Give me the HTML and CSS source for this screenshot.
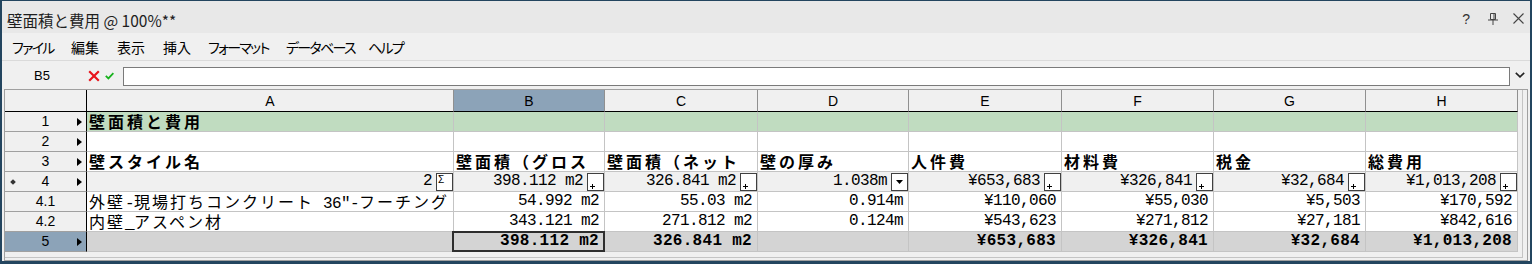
FILE: index.html
```html
<!DOCTYPE html>
<html lang="ja">
<head>
<meta charset="utf-8">
<title>壁面積と費用</title>
<link rel="stylesheet" href="styles.css">
</head>
<body>
<div class="window">
  <div class="titlebar">
    <span class="title">壁面積と費用 @ 100%**</span>
    <div class="tb-icons">
      <span class="tb-help">?</span>
      <svg class="tb-pin" width="10" height="12" viewBox="0 0 10 12"><path d="M2.5 0.5H7.5V6.5H2.5Z" fill="none" stroke="#444" stroke-width="1"/><path d="M6 1V6.5" stroke="#444" stroke-width="1"/><path d="M0 7H10" stroke="#444" stroke-width="1"/><path d="M5 7V12" stroke="#444" stroke-width="1"/></svg>
      <svg class="tb-close" width="11" height="11" viewBox="0 0 11 11"><path d="M0.5 0.5L10.5 10.5M10.5 0.5L0.5 10.5" stroke="#444" stroke-width="1.1"/></svg>
    </div>
  </div>
  <div class="menubar">
    <span class="mi k m-file">ファイル</span>
    <span class="mi m-edit">編集</span>
    <span class="mi m-view">表示</span>
    <span class="mi m-ins">挿入</span>
    <span class="mi k m-fmt">フォーマット</span>
    <span class="mi k m-db">データベース</span>
    <span class="mi k">ヘルプ</span>
  </div>
  <div class="formulabar">
    <div class="namebox">B5</div>
    <svg class="fx-cancel" width="12" height="12" viewBox="0 0 12 12"><path d="M1.2 1.2L10.8 10.8M10.8 1.2L1.2 10.8" stroke="#e8141b" stroke-width="2.2"/></svg>
    <svg class="fx-ok" width="9" height="8" viewBox="0 0 9 8"><path d="M0.8 3.8L3.4 6.4L8.4 1.2" fill="none" stroke="#17b21c" stroke-width="1.8"/></svg>
    <div class="fx-input"></div>
    <div class="fx-drop"><svg width="10" height="6" viewBox="0 0 10 6"><path d="M0.8 0.8L5 4.8L9.2 0.8" fill="none" stroke="#222" stroke-width="1.6"/></svg></div>
  </div>
  <div class="frame">
    <div class="viewport">
      <div class="grid">
        <div class="corner"></div>
        <div class="ch">A</div>
        <div class="ch sel">B</div>
        <div class="ch">C</div>
        <div class="ch">D</div>
        <div class="ch">E</div>
        <div class="ch">F</div>
        <div class="ch">G</div>
        <div class="ch">H</div>

        <div class="rh"><span class="rh-l"></span><span class="rh-n">1</span><span class="rh-r"><i class="tri"></i></span></div>
        <div class="c r1 b"><span class="jp">壁面積と費用</span></div>
        <div class="c r1"></div><div class="c r1"></div><div class="c r1"></div><div class="c r1"></div><div class="c r1"></div><div class="c r1"></div><div class="c r1"></div>

        <div class="rh"><span class="rh-l"></span><span class="rh-n">2</span><span class="rh-r"><i class="tri"></i></span></div>
        <div class="c"></div><div class="c"></div><div class="c"></div><div class="c"></div><div class="c"></div><div class="c"></div><div class="c"></div><div class="c"></div>

        <div class="rh"><span class="rh-l"></span><span class="rh-n">3</span><span class="rh-r"><i class="tri"></i></span></div>
        <div class="c b"><span class="jp">壁スタイル名</span></div>
        <div class="c b"><span class="jp">壁面積（グロス</span></div>
        <div class="c b"><span class="jp">壁面積（ネット</span></div>
        <div class="c b"><span class="jp">壁の厚み</span></div>
        <div class="c b"><span class="jp">人件費</span></div>
        <div class="c b"><span class="jp">材料費</span></div>
        <div class="c b"><span class="jp">税金</span></div>
        <div class="c b"><span class="jp">総費用</span></div>

        <div class="rh"><span class="rh-l"><i class="dia"></i></span><span class="rh-n">4</span><span class="rh-r"><i class="tri"></i></span></div>
        <div class="c r4 btn"><span>2</span><span class="box"><span class="sigma">Σ</span></span></div>
        <div class="c r4 btn"><span>398.112 m2</span><span class="box"><svg class="plus" width="5" height="5" viewBox="0 0 5 5"><path d="M0 2.5H5M2.5 0V5" stroke="#000" stroke-width="1"/></svg></span></div>
        <div class="c r4 btn"><span>326.841 m2</span><span class="box"><svg class="plus" width="5" height="5" viewBox="0 0 5 5"><path d="M0 2.5H5M2.5 0V5" stroke="#000" stroke-width="1"/></svg></span></div>
        <div class="c r4 btn"><span>1.038m</span><span class="box"><svg class="down" width="7" height="4" viewBox="0 0 7 4"><path d="M0 0H7L3.5 4Z" fill="#000"/></svg></span></div>
        <div class="c r4 btn"><span>¥653,683</span><span class="box"><svg class="plus" width="5" height="5" viewBox="0 0 5 5"><path d="M0 2.5H5M2.5 0V5" stroke="#000" stroke-width="1"/></svg></span></div>
        <div class="c r4 btn"><span>¥326,841</span><span class="box"><svg class="plus" width="5" height="5" viewBox="0 0 5 5"><path d="M0 2.5H5M2.5 0V5" stroke="#000" stroke-width="1"/></svg></span></div>
        <div class="c r4 btn"><span>¥32,684</span><span class="box"><svg class="plus" width="5" height="5" viewBox="0 0 5 5"><path d="M0 2.5H5M2.5 0V5" stroke="#000" stroke-width="1"/></svg></span></div>
        <div class="c r4 btn"><span>¥1,013,208</span><span class="box"><svg class="plus" width="5" height="5" viewBox="0 0 5 5"><path d="M0 2.5H5M2.5 0V5" stroke="#000" stroke-width="1"/></svg></span></div>

        <div class="rh"><span class="rh-l"></span><span class="rh-n">4.1</span><span class="rh-r"></span></div>
        <div class="c"><span class="jp">外壁</span>-<span class="jp">現場打ちコンクリート</span> 36″-<span class="jp">フーチング</span></div>
        <div class="c num">54.992 m2</div>
        <div class="c num">55.03 m2</div>
        <div class="c num">0.914m</div>
        <div class="c num">¥110,060</div>
        <div class="c num">¥55,030</div>
        <div class="c num">¥5,503</div>
        <div class="c num">¥170,592</div>

        <div class="rh"><span class="rh-l"></span><span class="rh-n">4.2</span><span class="rh-r"></span></div>
        <div class="c"><span class="jp">内壁</span>_<span class="jp">アスペン材</span></div>
        <div class="c num">343.121 m2</div>
        <div class="c num">271.812 m2</div>
        <div class="c num">0.124m</div>
        <div class="c num">¥543,623</div>
        <div class="c num">¥271,812</div>
        <div class="c num">¥27,181</div>
        <div class="c num">¥842,616</div>

        <div class="rh sel"><span class="rh-l"></span><span class="rh-n">5</span><span class="rh-r"><i class="tri"></i></span></div>
        <div class="c r5"></div>
        <div class="c r5 num b selcell">398.112 m2</div>
        <div class="c r5 num b">326.841 m2</div>
        <div class="c r5"></div>
        <div class="c r5 num b">¥653,683</div>
        <div class="c r5 num b">¥326,841</div>
        <div class="c r5 num b">¥32,684</div>
        <div class="c r5 num b">¥1,013,208</div>
      </div>
    </div>
  </div>
</div>
</body>
</html>
```

FILE: styles.css
```css
html, body {
  margin: 0;
  padding: 0;
}
body {
  width: 1532px;
  height: 264px;
  overflow: hidden;
  font-family: "Noto Sans CJK JP", "Liberation Sans", sans-serif;
  color: #000;
}
.window {
  box-sizing: border-box;
  width: 1532px;
  height: 264px;
  border-style: solid;
  border-color: #23455f;
  border-width: 1px 2px 3px 2px;
  background: #f0f0f0;
  display: flex;
  flex-direction: column;
}
.titlebar {
  box-sizing: border-box;
  height: 32px;
  background: #e8e8e8;
  display: flex;
  align-items: center;
  padding: 6px 0 0 5px;
}
.title {
  font-size: 15.5px;
  color: #1e1e1e;
  flex: 1;
  line-height: 20px;
}
.tb-icons {
  display: flex;
  align-items: center;
  margin-top: -3px;
}
.tb-help {
  font-family: "Liberation Sans", sans-serif;
  font-size: 14px;
  color: #333;
  margin-right: 18px;
}
.tb-pin {
  margin-right: 15px;
}
.tb-close {
  margin-right: 6px;
}
.menubar {
  box-sizing: border-box;
  height: 28px;
  border-bottom: 1px solid #dadada;
  display: flex;
  align-items: center;
  padding-left: 10px;
  font-size: 14px;
  font-feature-settings: "palt";
}
.mi {
  line-height: 20px;
  white-space: nowrap;
}
.mi.k {
  letter-spacing: -1.7px;
}
.m-file { width: 59px; }
.m-edit { width: 46px; }
.m-view { width: 46px; }
.m-ins { width: 45px; }
.m-fmt { width: 78px; }
.m-db { width: 82px; }
.formulabar {
  box-sizing: border-box;
  height: 28px;
  display: flex;
  align-items: center;
}
.namebox {
  width: 80px;
  text-align: center;
  font-family: "Liberation Sans", sans-serif;
  font-size: 13px;
}
.fx-cancel {
  margin-left: 6px;
  margin-top: 2px;
}
.fx-ok {
  margin-left: 5px;
  margin-top: 2px;
}
.fx-input {
  box-sizing: border-box;
  flex: 1;
  height: 19px;
  margin-left: 9px;
  margin-top: 2px;
  border: 1px solid #7a7a7a;
  background: #fff;
}
.fx-drop {
  width: 20px;
  display: flex;
  justify-content: center;
  margin-top: -1px;
}
.frame {
  box-sizing: border-box;
  height: 172px;
  margin: 0 2px;
  border: 1px solid #a0a0a0;
  padding: 0 4px 2px 0;
}
.viewport {
  box-sizing: border-box;
  height: 168px;
  border-right: 1px solid #c4c4c4;
  border-bottom: 1px solid #c4c4c4;
  padding: 0 4px 0 0;
}
.grid {
  display: grid;
  grid-template-columns: 82px 367px 151px 153px 151px 153px 152px 152px 152px;
  grid-template-rows: 22px repeat(7, 20px);
}
.grid > div {
  box-sizing: border-box;
  border-right: 1px solid #c4c4c4;
  border-bottom: 1px solid #c4c4c4;
  overflow: hidden;
  white-space: nowrap;
  background: #fff;
}
.grid > .corner {
  background: #f0f0f0;
  border-right: 1px solid #000;
  border-bottom: 1px solid #000;
}
.grid > .ch {
  background: #f0f0f0;
  border-right: 1px solid #909090;
  border-bottom: 1px solid #000;
  text-align: center;
  font-family: "Liberation Sans", sans-serif;
  font-size: 14px;
  line-height: 22px;
}
.grid > .rh {
  background: #f0f0f0;
  border-right: 1px solid #000;
  border-bottom: 1px solid #a0a0a0;
  display: flex;
  align-items: center;
  font-family: "Liberation Sans", sans-serif;
  font-size: 14px;
}
.grid > .sel {
  background: #8ca3b8;
}
.rh-l, .rh-r {
  width: 13px;
  height: 19px;
  display: flex;
  align-items: center;
}
.rh-n {
  flex: 1;
  text-align: center;
  line-height: 19px;
}
.tri {
  display: block;
  width: 0;
  height: 0;
  border-left: 5px solid #000;
  border-top: 4px solid transparent;
  border-bottom: 4px solid transparent;
  margin-left: 4px;
}
.dia {
  display: block;
  width: 4px;
  height: 4px;
  background: #333;
  transform: rotate(45deg);
  margin-left: 6px;
}
.c {
  font-family: "Liberation Mono", "Noto Sans CJK JP", monospace;
  font-size: 16px;
  letter-spacing: -0.6px;
  line-height: 19px;
  padding: 0 5px 0 2px;
}
.num {
  text-align: right;
}
.grid > .r1 {
  background: #c0dcc0;
}
.grid > .r4 {
  background: #f0f0f0;
}
.grid > .r5 {
  background: #d4d4d4;
}
.b {
  font-weight: 700;
  letter-spacing: 0.3px;
}
.jp {
  display: inline-block;
  height: 19px;
  line-height: 19px;
  font-family: "Noto Sans CJK JP", sans-serif;
  font-size: 16px;
  letter-spacing: 2px;
}
.b .jp {
  letter-spacing: 3px;
}
.btn {
  display: flex;
  justify-content: flex-end;
  align-items: center;
}
.grid > .btn {
  padding-right: 0;
}
.box {
  box-sizing: border-box;
  width: 17px;
  height: 18px;
  margin-left: 4px;
  align-self: flex-end;
  border: 1px solid #404040;
  background: #fff;
  display: flex;
  position: relative;
}
.plus {
  margin: 10px 0 0 2px;
}
.down {
  margin: 6px 0 0 4px;
}
.sigma {
  font-family: "Liberation Sans", sans-serif;
  font-size: 10px;
  line-height: 10px;
  margin: 1px 0 0 1px;
  letter-spacing: 0;
}
.grid > .selcell {
  position: relative;
  overflow: visible;
}
.selcell::after {
  content: "";
  position: absolute;
  left: -2px;
  top: -1px;
  right: -1px;
  bottom: -1px;
  border: 2px solid #2e2e2e;
}
```
